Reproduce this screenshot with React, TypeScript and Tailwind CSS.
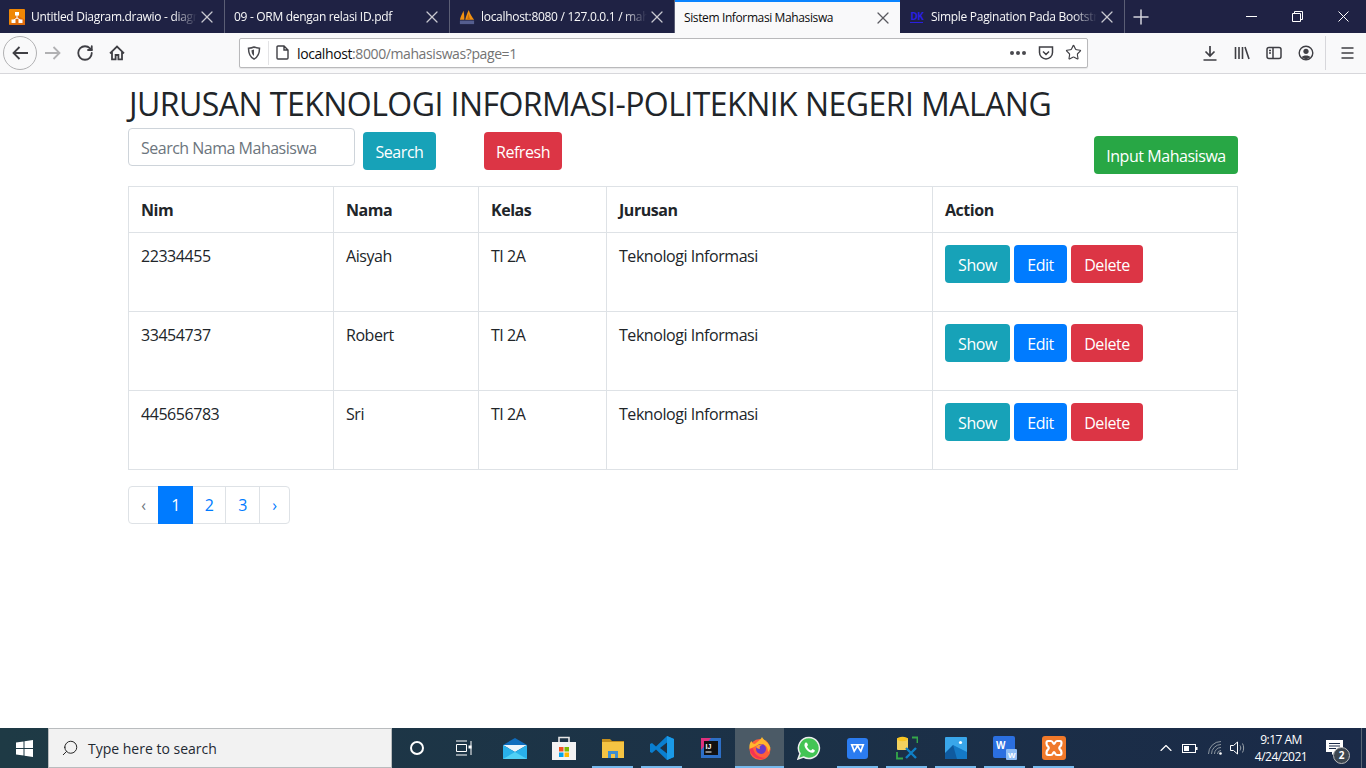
import { RotateCw, Star, X, Plus, Search, ChevronUp } from 'lucide-react';

const rows = [
    { nim: '22334455', nama: 'Aisyah', kelas: 'TI 2A', jurusan: 'Teknologi Informasi' },
    { nim: '33454737', nama: 'Robert', kelas: 'TI 2A', jurusan: 'Teknologi Informasi' },
    { nim: '445656783', nama: 'Sri', kelas: 'TI 2A', jurusan: 'Teknologi Informasi' },
];

function Tab({ title, icon, active }: { title: string; icon?: React.ReactNode; active?: boolean }) {
    if (active) {
        return (
            <div className="flex h-[33px] w-[225px] shrink-0 items-center border-t-2 border-[#0a84ff] bg-[#f9f9fa] pl-[9px] pr-[7px] text-[#0c0c0d]">
                <span className="flex-1 truncate text-[12px] tracking-[-0.38px]">{title}</span>
                <X size={20} strokeWidth={1.5} className="text-[#5a5a60]" />
            </div>
        );
    }
    return (
        <div className="flex h-[33px] w-[225px] shrink-0 items-center border-r border-[#5b5e75] pl-[9px] pr-[7px] text-[#f9f9fa]">
            {icon && <span className="mr-[6px] flex h-4 w-4 shrink-0 items-center justify-center">{icon}</span>}
            <span className="flex-1 overflow-hidden whitespace-nowrap text-[12px] tracking-[-0.3px] [mask-image:linear-gradient(to_left,transparent,black_24px)]">{title}</span>
            <X size={20} strokeWidth={1.5} className="shrink-0 text-[#c8c8d0]" />
        </div>
    );
}

function DrawioIcon() {
    return (
        <svg width="16" height="16" viewBox="0 0 16 16">
            <rect width="16" height="16" rx="1" fill="#f08705" />
            <path d="M0 16 L8 6 L16 11 L16 16Z" fill="#df6c0c" />
            <path d="M8 6 V9 M8 9 L4.5 11 M8 9 L11.5 11" stroke="#fff" strokeWidth="1" fill="none" />
            <rect x="6" y="3" width="4" height="3.5" fill="#fff" />
            <rect x="2.5" y="10.5" width="4" height="3.5" fill="#fff" />
            <rect x="9.5" y="10.5" width="4" height="3.5" fill="#fff" />
        </svg>
    );
}

function PmaIcon() {
    return (
        <svg width="18" height="16" viewBox="0 0 18 16">
            <path d="M1 11 C2 7 4 4 5 1 C6 5 6 8 6 11Z" fill="#f29111" />
            <path d="M7 11 C8 7 9 4 11 0 C12 4 15 8 17 11Z" fill="#f29111" />
            <path d="M9 11 C10 8 10 6 11 4 C11 7 12 9 13 11Z" fill="#c96f0c" />
            <rect x="1" y="12" width="16" height="4" fill="#6c78af" opacity="0.7" />
        </svg>
    );
}

function DkIcon() {
    return (
        <span className="flex flex-col items-center leading-none">
            <span className="text-[10px] font-bold leading-[10px] tracking-[-0.5px] text-[#2a1fe0]">DK</span>
            <span className="mt-[1px] h-[1px] w-[13px] bg-[#2a1fe0]" />
        </span>
    );
}

function TabBar() {
    return (
        <div className="flex h-[33px] shrink-0 items-center bg-[#1f2244]">
            <Tab title="Untitled Diagram.drawio - diagrams.net" icon={<DrawioIcon />} />
            <Tab title="09 - ORM dengan relasi ID.pdf" />
            <Tab title="localhost:8080 / 127.0.0.1 / mahasiswa" icon={<PmaIcon />} />
            <Tab title="Sistem Informasi Mahasiswa" active />
            <Tab title="Simple Pagination Pada Bootstrap" icon={<DkIcon />} />
            <span className="flex w-[32px] justify-center">
                <Plus size={24} strokeWidth={1.5} className="text-[#d4d4dc]" />
            </span>
            <div className="ml-auto flex h-full items-center text-white">
                <span className="flex w-[46px] justify-center">
                    <svg width="11" height="11" viewBox="0 0 11 11"><path d="M0 5.5 H11" stroke="currentColor" /></svg>
                </span>
                <span className="flex w-[46px] justify-center">
                    <svg width="11" height="11" viewBox="0 0 11 11" fill="none" stroke="currentColor"><path d="M.5 2.5 H8.5 V10.5 H.5Z M2.5 2.5 V.5 H10.5 V8.5 H8.5" /></svg>
                </span>
                <span className="flex w-[46px] justify-center">
                    <svg width="11" height="11" viewBox="0 0 11 11" stroke="currentColor"><path d="M.5 .5 L10.5 10.5 M10.5 .5 L.5 10.5" /></svg>
                </span>
            </div>
        </div>
    );
}

function ToolBtn({ children, className = '' }: { children: React.ReactNode; className?: string }) {
    return <span className={`flex h-8 w-8 shrink-0 items-center justify-center text-[#3f3f44] ${className}`}>{children}</span>;
}

function ToolBar() {
    return (
        <div className="flex h-[41px] shrink-0 items-center border-b border-[#d7d7db] bg-[#f9f9fa] pb-[1px] pl-[3px]">
            <span className="flex h-[34px] w-[34px] shrink-0 items-center justify-center rounded-full border border-[#b1b1b3] text-[#3f3f44]">
                <svg width="16" height="14" viewBox="0 0 16 14" fill="none" stroke="currentColor" strokeWidth="1.8">
                    <path d="M16 7 H1.500 M7.500 1 L1.500 7 L7.500 13" />
                </svg>
            </span>
            <ToolBtn>
                <svg width="16" height="14" viewBox="0 0 16 14" fill="none" stroke="#b1b1b3" strokeWidth="1.8">
                    <path d="M0 7 H14.500 M8.500 1 L14.500 7 L8.500 13" />
                </svg>
            </ToolBtn>
            <ToolBtn><RotateCw size={18} strokeWidth={2.4} /></ToolBtn>
            <ToolBtn>
                <svg width="16" height="16" viewBox="0 0 16 16" fill="none" stroke="currentColor" strokeWidth="1.8">
                    <path d="M1 8.300 L8 1.600 L15 8.300 M3 7 V14.400 H6.600 V10 H9.400 V14.400 H13 V7" />
                </svg>
            </ToolBtn>
            <div className="ml-[106px] flex h-[30px] w-[849px] shrink-0 items-center rounded-[2px] border border-[#b9b9bb] bg-white shadow-[0_1px_1px_rgba(0,0,0,0.08)]">
                <span className="ml-[7px] flex w-[14px] justify-center text-[#4a4a4f]">
                    <svg width="14" height="14" viewBox="0 0 14 14" fill="none" stroke="currentColor" strokeWidth="1.5">
                        <path d="M7 1 C9 2 11 2.200 12.500 2.200 C12.500 8 11 11 7 13 C3 11 1.500 8 1.500 2.200 C3 2.200 5 2 7 1Z" />
                        <path d="M7 3.500 V10 C5.500 9 4.500 7.500 4.500 4.300 Z" fill="currentColor" stroke="none" />
                    </svg>
                </span>
                <span className="ml-[7px] h-[24px] w-px bg-[#e3e3e5]" />
                <span className="ml-[6px] flex w-[14px] justify-center text-[#3f3f44]">
                    <svg width="13" height="15" viewBox="0 0 13 15" fill="none" stroke="currentColor" strokeWidth="1.4">
                        <path d="M1 2 A1 1 0 0 1 2 1 H8 L12 5 V13 A1 1 0 0 1 11 14 H2 A1 1 0 0 1 1 13Z M8 1 V5 H12" />
                    </svg>
                </span>
                <span className="ml-[8px] pt-[2px] text-[14px] leading-none tracking-[-0.4px] text-[#737373]"><span className="text-[#0c0c0d]">localhost</span>:8000/mahasiswas?page=1</span>
                <span className="ml-auto flex items-center text-[#4a4a4f]">
                    <span className="h-[4px] w-[4px] rounded-full bg-current" />
                    <span className="ml-[2px] h-[4px] w-[4px] rounded-full bg-current" />
                    <span className="ml-[2px] h-[4px] w-[4px] rounded-full bg-current" />
                </span>
                <span className="ml-[12px] text-[#3f3f44]">
                    <svg width="16" height="16" viewBox="0 0 16 16" fill="none" stroke="currentColor" strokeWidth="1.5">
                        <path d="M1.500 2 H14.500 V7.500 C14.500 11 11.500 14 8 14 C4.500 14 1.500 11 1.500 7.500Z M5 6.500 L8 9.500 L11 6.500" />
                    </svg>
                </span>
                <Star size={17} strokeWidth={1.6} className="ml-[11px] mr-[5px] text-[#3f3f44]" />
            </div>
            <div className="ml-[106px] flex items-center">
                <ToolBtn>
                    <svg width="14" height="16" viewBox="0 0 14 16" fill="none" stroke="currentColor" strokeWidth="1.7">
                        <path d="M7 1 V11 M2.500 6.500 L7 11 L11.500 6.500 M.5 15 H13.500" />
                    </svg>
                </ToolBtn>
                <ToolBtn>
                    <svg width="16" height="16" viewBox="0 0 16 16" fill="none" stroke="currentColor" strokeWidth="1.6">
                        <path d="M1.500 2 V14 M5 2 V14 M8.500 2 V14 M11 2 L15 14" />
                    </svg>
                </ToolBtn>
                <ToolBtn>
                    <svg width="16" height="16" viewBox="0 0 16 16" fill="none" stroke="currentColor" strokeWidth="1.5">
                        <rect x="1" y="2.500" width="14" height="11" rx="2" />
                        <path d="M7 2.500 V13.500 M3 5.500 H5 M3 8 H5" />
                    </svg>
                </ToolBtn>
                <ToolBtn>
                    <svg width="16" height="16" viewBox="0 0 16 16" fill="none" stroke="currentColor" strokeWidth="1.400">
                        <circle cx="8" cy="8" r="6.800" />
                        <circle cx="8" cy="6.300" r="2.600" fill="currentColor" stroke="none" />
                        <path d="M3.500 12.300 C5 9.800 11 9.800 12.500 12.300 L8 14.500Z" fill="currentColor" stroke="none" />
                    </svg>
                </ToolBtn>
                <span className="ml-[3px] h-[34px] w-px bg-[#d7d7db]" />
                <ToolBtn className="ml-[5px]">
                    <svg width="13" height="12" viewBox="0 0 13 12" stroke="currentColor" strokeWidth="1.7">
                        <path d="M.5 1 H12.500 M.5 6 H12.500 M.5 11 H12.500" />
                    </svg>
                </ToolBtn>
            </div>
        </div>
    );
}

function Btn({ color, children, className = '' }: { color: string; children: React.ReactNode; className?: string }) {
    return <button className={`h-[38px] whitespace-nowrap rounded-[4px] pt-[1px] text-center text-[16px] text-white ${color} ${className}`}>{children}</button>;
}

function Page() {
    return (
        <div className="min-h-0 flex-1 overflow-hidden bg-white font-['Open_Sans','Noto_Sans',sans-serif] text-[16px] tracking-[-0.45px] text-[#212529]">
            <div className="mx-auto w-[1110px]">
                <h2 className="mt-[11px] h-[43px] pl-[1px] text-[32px] leading-[38px] tracking-[-0.54px]">JURUSAN TEKNOLOGI INFORMASI-POLITEKNIK NEGERI MALANG</h2>
                <div className="flex items-start">
                    <div className="flex h-[38px] w-[227px] items-center rounded-[4px] border border-[#ced4da] px-[12px] pt-[1px] tracking-[-0.5px] text-[#6c757d]">Search Nama Mahasiswa</div>
                    <Btn color="bg-[#17a2b8]" className="ml-[8px] mt-[4px] w-[73px]">Search</Btn>
                    <Btn color="bg-[#dc3545]" className="ml-[48px] mt-[4px] w-[78px]">Refresh</Btn>
                    <Btn color="bg-[#28a745]" className="ml-auto mt-[8px] w-[144px]">Input Mahasiswa</Btn>
                </div>
                <table className="mt-[12px] w-[1110px] table-fixed border-collapse">
                    <thead>
                        <tr className="h-[46px] text-left">
                            <th className="w-[205px] border border-[#dee2e6] px-[12px] font-bold">Nim</th>
                            <th className="w-[145px] border border-[#dee2e6] px-[12px] font-bold">Nama</th>
                            <th className="w-[128px] border border-[#dee2e6] px-[12px] font-bold">Kelas</th>
                            <th className="w-[326px] border border-[#dee2e6] px-[12px] font-bold">Jurusan</th>
                            <th className="border border-[#dee2e6] px-[12px] font-bold">Action</th>
                        </tr>
                    </thead>
                    <tbody>
                        {rows.map(r => (
                            <tr key={r.nim} className="h-[79px] align-top">
                                <td className="border border-[#dee2e6] px-[12px] pt-[11px] leading-[24px]">{r.nim}</td>
                                <td className="border border-[#dee2e6] px-[12px] pt-[11px] leading-[24px]">{r.nama}</td>
                                <td className="border border-[#dee2e6] px-[12px] pt-[11px] leading-[24px]">{r.kelas}</td>
                                <td className="border border-[#dee2e6] px-[12px] pt-[11px] leading-[24px]">{r.jurusan}</td>
                                <td className="border border-[#dee2e6] px-[12px] pt-[12px]">
                                    <div className="flex gap-[4px]">
                                        <Btn color="bg-[#17a2b8]" className="w-[65px]">Show</Btn>
                                        <Btn color="bg-[#007bff]" className="w-[53px]">Edit</Btn>
                                        <Btn color="bg-[#dc3545]" className="w-[72px]">Delete</Btn>
                                    </div>
                                </td>
                            </tr>
                        ))}
                    </tbody>
                </table>
                <div className="mt-[16px] flex h-[38px] w-[162px] rounded-[4px] border border-[#dee2e6] text-[#007bff]">
                    <span className="flex w-[29px] items-center justify-center text-[#6c757d]">‹</span>
                    <span className="my-[-1px] flex w-[35px] items-center justify-center bg-[#007bff] text-white">1</span>
                    <span className="flex w-[33px] items-center justify-center border-r border-[#dee2e6]">2</span>
                    <span className="flex w-[34px] items-center justify-center border-r border-[#dee2e6]">3</span>
                    <span className="flex flex-1 items-center justify-center">›</span>
                </div>
            </div>
        </div>
    );
}

const mailIcon = (
    <svg width="24" height="21" viewBox="0 0 24 21">
        <path d="M0 7 L12 0 L24 7 L12 14Z" fill="#0f6cbd" />
        <path d="M0 7 H24 L12 14Z" fill="#ffffff" opacity="0.92" />
        <path d="M0 7 L12 14 L24 7 V21 H0Z" fill="#29b0ea" />
        <path d="M0 21 L12 14 L24 21Z" fill="#50d0f5" />
    </svg>
);
const storeIcon = (
    <svg width="24" height="24" viewBox="0 0 24 24">
        <path d="M7 7 V1.500 H17 V7" fill="none" stroke="#e6e6e6" strokeWidth="1.600" />
        <rect y="6" width="24" height="18" fill="#f3f3f3" />
        <rect x="7" y="11" width="4.500" height="4.500" fill="#f25022" />
        <rect x="12.500" y="11" width="4.500" height="4.500" fill="#7fba00" />
        <rect x="7" y="16.500" width="4.500" height="4.500" fill="#00a4ef" />
        <rect x="12.500" y="16.500" width="4.500" height="4.500" fill="#ffb900" />
    </svg>
);
const folderIcon = (
    <svg width="22" height="20" viewBox="0 0 22 20">
        <path d="M0 1 H8 L10 3 H22 V6 H0Z" fill="#c58f1c" />
        <rect y="4" width="22" height="16" fill="#f5c443" />
        <rect x="6" y="13" width="10" height="7" fill="#3e8ed0" />
        <rect x="9" y="16" width="4" height="4" fill="#f5c443" />
    </svg>
);
const vscodeIcon = (
    <svg width="24" height="24" viewBox="0 0 24 24">
        <path d="M17 0 L24 3 V21 L17 24 L6 13.500 L2 17 L0 16 V8 L2 7 L6 10.500Z M17 6.500 L10 12 L17 17.500Z" fill="#0a7fd0" fillRule="evenodd" />
        <path d="M17 0 L24 3 V21 L17 24Z" fill="#1a9ae8" />
    </svg>
);
const ijIcon = (
    <svg width="20" height="20" viewBox="0 0 20 20">
        <rect width="20" height="20" fill="#2d6fc7" />
        <path d="M0 0 H10 L0 12Z" fill="#e0317e" />
        <rect x="3" y="3" width="14" height="14" fill="#111" />
        <text x="4.500" y="10.500" fontSize="7" fontWeight="700" fill="#fff" fontFamily="Liberation Sans">IJ</text>
        <rect x="4.500" y="13.500" width="6" height="1" fill="#fff" />
    </svg>
);
const firefoxIcon = (
    <svg width="24" height="24" viewBox="0 0 24 24">
        <circle cx="12" cy="13.500" r="10.500" fill="#ff5f3a" />
        <path d="M1.500 13 C1 9 2 6.500 3.500 5 C4 7 5 8 7 8 C9 5.500 12 5 14 1 C15 4 20 5 22.500 12 C23 10 22 14 20 16 C20 10 16 7.500 12 8Z" fill="#ffb72e" />
        <path d="M1.500 13 C3 20 10 25 18 22 C12 22 6 19 5 12Z" fill="#f0245f" opacity="0.75" />
        <circle cx="13" cy="13" r="5" fill="#6a3bc8" />
        <path d="M8 11 C9 9 12 8 15 9 C12 9 11 11 12 13 C10 13 9 12 8 11Z" fill="#ff9b32" />
    </svg>
);
const whatsappIcon = (
    <svg width="24" height="24" viewBox="0 0 24 24">
        <path d="M12 1.500 A10.500 10.500 0 1 1 6.500 21 L1 23 L3 17.500 A10.500 10.500 0 0 1 12 1.500Z" fill="#43c554" stroke="#eee" strokeWidth="1.500" />
        <path d="M8.500 6.500 C7 8 7 10 9 13 C11 16 14.500 17.500 16.500 16.500 C18 15.500 18 14.500 17.500 14 L15.500 13 L14 14.500 C12.500 14 10.500 12 10 10.500 L11 9 L10 6.700Z" fill="#fff" />
    </svg>
);
const wpsIcon = (
    <svg width="21" height="21" viewBox="0 0 21 21">
        <rect width="21" height="21" rx="3" fill="#2b7cf0" />
        <path d="M3.500 6 H17.500 L14 15 L10.500 9.500 L7 15Z M6 7.500 L7.500 11.500 L9.500 7.500Z M11.500 7.500 L13.500 11.500 L15 7.500Z" fill="#fff" fillRule="evenodd" />
    </svg>
);
const kiteIcon = (
    <svg width="22" height="24" viewBox="0 0 22 24">
        <rect x="1" y="2" width="11" height="12" rx="1" fill="#f3d25f" />
        <ellipse cx="6.500" cy="3" rx="5.500" ry="2.200" fill="#f9c623" />
        <path d="M16 1.500 H21.500 V7 M1 16 V22.500 H7" fill="none" stroke="#35a84a" strokeWidth="1.800" />
        <path d="M10 12 L20 22 M20 12 L10 22" stroke="#0f7fc6" strokeWidth="2.400" />
    </svg>
);
const photosIcon = (
    <svg width="22" height="22" viewBox="0 0 22 22">
        <rect width="22" height="22" rx="1" fill="#39a6ea" />
        <circle cx="15.500" cy="5.500" r="1.600" fill="#fff" />
        <path d="M0 16 L8 8 L22 20 V22 H0Z" fill="#0f5a9f" />
        <path d="M8 8 L22 15 V22 L12 22Z" fill="#1479c6" />
    </svg>
);
const wordIcon = (
    <svg width="24" height="24" viewBox="0 0 24 24">
        <rect width="22" height="22" rx="2" fill="#2b6fe0" />
        <text x="3" y="13" fontSize="10" fontWeight="700" fill="#fff" fontFamily="Liberation Sans">W</text>
        <rect x="13" y="13" width="11" height="11" rx="1" fill="#8fbdf5" />
        <text x="15" y="22" fontSize="8" fontWeight="700" fill="#fff" fontFamily="Liberation Sans">W</text>
    </svg>
);
const xamppIcon = (
    <svg width="24" height="24" viewBox="0 0 24 24">
        <rect width="24" height="24" rx="3" fill="#f0792a" />
        <path d="M6 5 H9 C11 5 11 8 12 8 C13 8 13 5 15 5 H18 C20 5 20 9 18 10.500 C17 11.300 17 12.700 18 13.500 C20 15 20 19 18 19 H15 C13 19 13 16 12 16 C11 16 11 19 9 19 H6 C4 19 4 15 6 13.500 C7 12.700 7 11.300 6 10.500 C4 9 4 5 6 5Z" fill="none" stroke="#fff" strokeWidth="2.200" />
    </svg>
);

const taskItems = [
    { icon: mailIcon, running: false },
    { icon: storeIcon, running: false },
    { icon: folderIcon, running: true },
    { icon: vscodeIcon, running: true },
    { icon: ijIcon, running: false },
    { icon: firefoxIcon, running: true, active: true },
    { icon: whatsappIcon, running: false },
    { icon: wpsIcon, running: true },
    { icon: kiteIcon, running: true },
    { icon: photosIcon, running: true },
    { icon: wordIcon, running: true },
    { icon: xamppIcon, running: true },
];

function TaskBar() {
    return (
        <div className="flex h-10 shrink-0 items-center bg-gradient-to-r from-[#1e3a45] to-[#1a2a48] font-['Open_Sans',sans-serif] text-white">
            <span className="flex w-[48px] justify-center">
                <svg width="17" height="17" viewBox="0 0 17 17" fill="#fff">
                    <path d="M0 2.500 L7.500 1.400 V8 H0Z M8.500 1.200 L17 0 V8 H8.500Z M0 9 H7.500 V15.600 L0 14.500Z M8.500 9 H17 V17 L8.500 15.800Z" />
                </svg>
            </span>
            <div className="flex h-10 w-[344px] items-center border border-[#b9bcbe] bg-[#f2f2f2] pl-[12px] text-[14px] text-[#1f2a33]">
                <Search size={18} strokeWidth={1.3} className="mr-[9px] -scale-x-100 text-[#222]" />
                Type here to search
            </div>
            <span className="flex w-[49px] justify-center">
                <span className="h-[14px] w-[14px] rounded-full border-2 border-white" />
            </span>
            <span className="flex w-[45px] justify-center">
                <svg width="18" height="16" viewBox="0 0 18 16" fill="none" stroke="#fff" strokeWidth="1">
                    <path d="M1 1 H12 M1 15 H12 M1.500 4.500 H11.500 V11.500 H1.500Z M16 1 V15" />
                    <rect x="13.500" y="5.500" width="3" height="3" fill="#fff" stroke="none" />
                </svg>
            </span>
            <div className="ml-[4px] flex h-10">
                {taskItems.map((t, i) => (
                    <div key={i} className={`relative flex h-10 w-[49px] items-center justify-center ${t.active ? 'bg-[#4b5a66]' : ''}`}>
                        {t.icon}
                        {t.running && <span className={`absolute bottom-0 h-[2px] bg-[#76b9ed] ${t.active ? 'left-0 w-full' : 'left-[4px] w-[41px]'}`} />}
                    </div>
                ))}
            </div>
            <div className="ml-auto flex h-full items-center">
                <ChevronUp size={20} strokeWidth={1.4} />
                <svg className="ml-[6px]" width="16" height="9" viewBox="0 0 16 9">
                    <rect x=".5" y=".5" width="13" height="8" fill="none" stroke="#fff" />
                    <rect x="2" y="2" width="5" height="5" fill="#fff" />
                    <rect x="14" y="3" width="1.500" height="3" fill="#fff" />
                </svg>
                <svg className="ml-[10px]" width="15" height="14" viewBox="0 0 15 14" fill="none" stroke="#8d97a0">
                    <path d="M.5 13 A12.500 12.500 0 0 1 13 .5 M3.500 13 A9.500 9.500 0 0 1 13 3.500 M6.500 13 A6.500 6.500 0 0 1 13 6.500 M9.500 13 A3.500 3.500 0 0 1 13 9.500" />
                    <circle cx="12.500" cy="12.500" r="1.300" fill="#fff" stroke="none" />
                </svg>
                <svg className="ml-[7px]" width="16" height="14" viewBox="0 0 16 14" fill="none" stroke="#fff">
                    <path d="M.5 4.500 H3.500 L7.500 1 V13 L3.500 9.500 H.5Z" />
                    <path d="M10 4.500 C11 6 11 8 10 9.500 M12.500 2.500 C14 5 14 9 12.500 11.500" stroke="#9aa3ab" />
                </svg>
                <div className="ml-[4px] flex w-[62px] flex-col items-center text-[12px] leading-[17px] tracking-[-0.5px]">
                    <span>9:17 AM</span>
                    <span>4/24/2021</span>
                </div>
                <span className="relative ml-[10px] flex w-[24px] justify-center">
                    <svg width="17" height="16" viewBox="0 0 17 16">
                        <path d="M0 0 H17 V12 H9 L6 15 V12 H0Z" fill="#fff" />
                        <path d="M3 3.500 H14 M3 6 H14 M3 8.500 H10" stroke="#1a2a48" />
                    </svg>
                    <span className="absolute left-[11px] top-[7px] flex h-[17px] w-[17px] items-center justify-center rounded-full border border-[#bbb] bg-[#3c4650] text-[10px] font-bold">2</span>
                </span>
                <span className="ml-[15px] mr-[4px] h-full w-px bg-[#5a6675]" />
            </div>
        </div>
    );
}

export default function App() {
    return (
        <div className="flex h-screen w-full flex-col overflow-hidden font-['Open_Sans','Noto_Sans',sans-serif]">
            <TabBar />
            <ToolBar />
            <Page />
            <TaskBar />
        </div>
    );
}
